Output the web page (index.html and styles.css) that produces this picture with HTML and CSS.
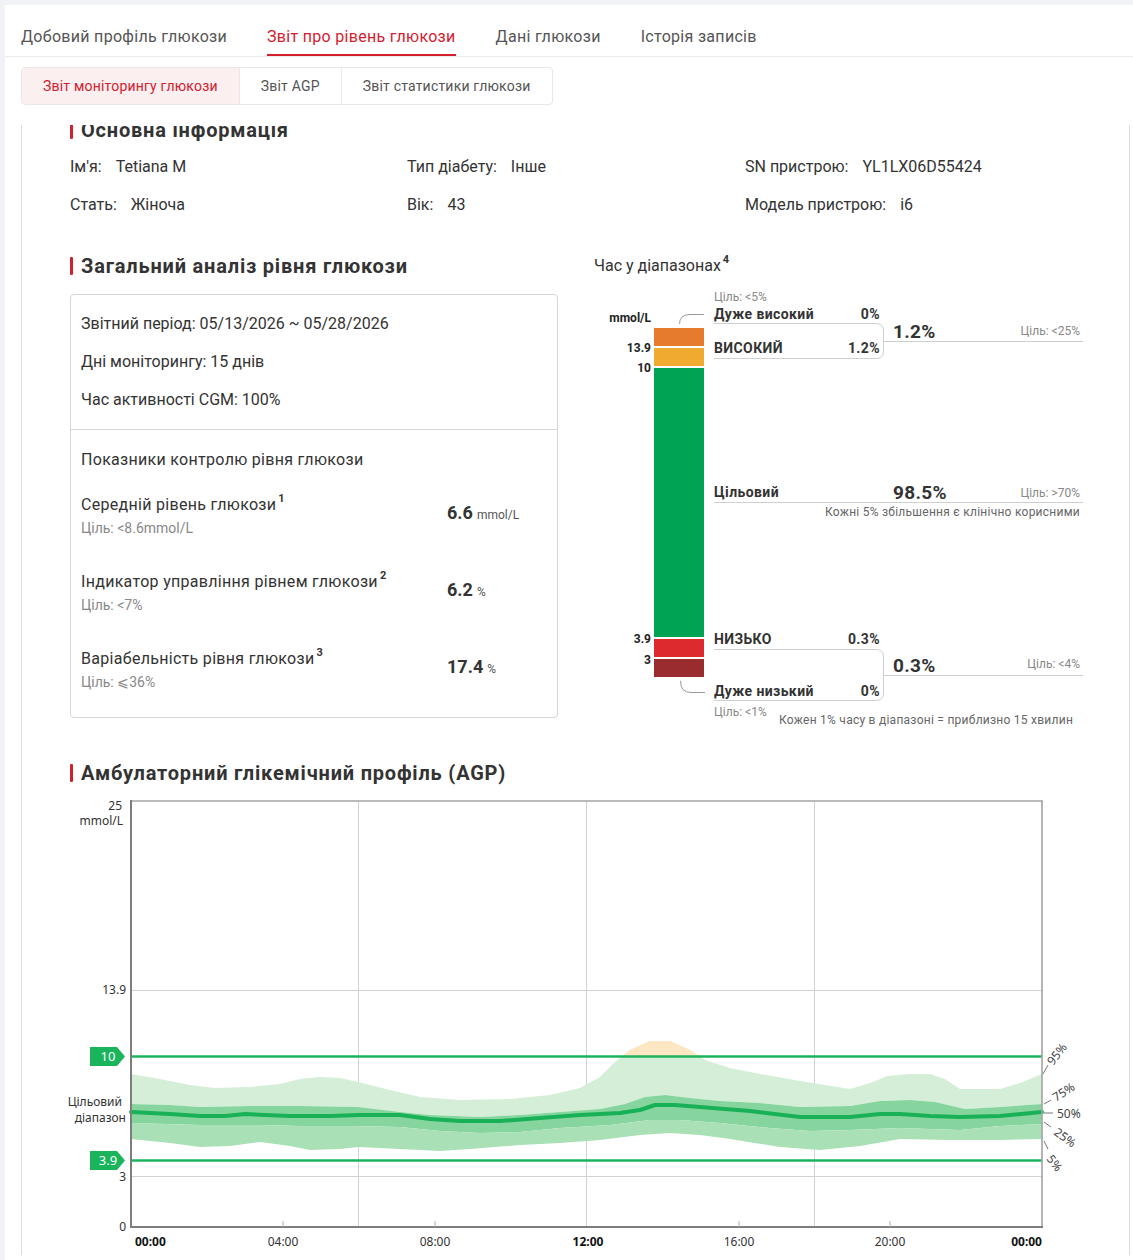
FILE: index.html
```html
<!DOCTYPE html>
<html lang="uk">
<head>
<meta charset="utf-8">
<title>Звіт про рівень глюкози</title>
<link rel="stylesheet" href="styles.css">
</head>
<body>
<div class="page">
  <nav class="tabs">
    <div class="tab">Добовий профіль глюкози</div>
    <div class="tab is-active">Звіт про рівень глюкози</div>
    <div class="tab">Дані глюкози</div>
    <div class="tab">Історія записів</div>
  </nav>

  <div class="subtabs">
    <div class="subtab is-active">Звіт моніторингу глюкози</div>
    <div class="subtab">Звіт AGP</div>
    <div class="subtab">Звіт статистики глюкози</div>
  </div>

  <div class="viewport">
    <div class="panel">
      <section class="info">
        <h2 class="sec-title">Основна інформація</h2>
        <div class="info-grid">
          <div class="info-item"><span class="info-label">Ім'я:</span><span>Tetiana M</span></div>
          <div class="info-item"><span class="info-label">Тип діабету:</span><span>Інше</span></div>
          <div class="info-item"><span class="info-label">SN пристрою:</span><span>YL1LX06D55424</span></div>
          <div class="info-item"><span class="info-label">Стать:</span><span>Жіноча</span></div>
          <div class="info-item"><span class="info-label">Вік:</span><span>43</span></div>
          <div class="info-item"><span class="info-label">Модель пристрою:</span><span>i6</span></div>
        </div>
      </section>

      <section class="overview">
        <div class="summary">
          <h2 class="sec-title">Загальний аналіз рівня глюкози</h2>
          <div class="card">
            <div class="card-top">
              <div class="card-line">Звітний період: 05/13/2026 ~ 05/28/2026</div>
              <div class="card-line">Дні моніторингу: 15 днів</div>
              <div class="card-line">Час активності CGM: 100%</div>
            </div>
            <div class="card-bottom">
              <div class="card-line card-heading">Показники контролю рівня глюкози</div>
              <div class="metric">
                <div class="metric-text">
                  <div class="metric-name">Середній рівень глюкози<sup class="note">1</sup></div>
                  <div class="metric-goal">Ціль: &lt;8.6mmol/L</div>
                </div>
                <div class="metric-value">6.6<span class="metric-unit">mmol/L</span></div>
              </div>
              <div class="metric">
                <div class="metric-text">
                  <div class="metric-name">Індикатор управління рівнем глюкози<sup class="note">2</sup></div>
                  <div class="metric-goal">Ціль: &lt;7%</div>
                </div>
                <div class="metric-value">6.2<span class="metric-unit">%</span></div>
              </div>
              <div class="metric">
                <div class="metric-text">
                  <div class="metric-name">Варіабельність рівня глюкози<sup class="note">3</sup></div>
                  <div class="metric-goal">Ціль: ⩽36%</div>
                </div>
                <div class="metric-value">17.4<span class="metric-unit">%</span></div>
              </div>
            </div>
          </div>
        </div>

        <div class="tir">
          <h3 class="tir-title">Час у діапазонах<sup class="note">4</sup></h3>
          <svg class="tir-chart" viewBox="0 0 490 460" xmlns="http://www.w3.org/2000/svg">
            <g transform="translate(-594 -278)">
              <!-- scale labels -->
              <text class="tir-axis" x="651" y="322" text-anchor="end">mmol/L</text>
              <text class="tir-axis" x="651" y="352" text-anchor="end">13.9</text>
              <text class="tir-axis" x="651" y="372" text-anchor="end">10</text>
              <text class="tir-axis" x="651" y="643" text-anchor="end">3.9</text>
              <text class="tir-axis" x="651" y="664" text-anchor="end">3</text>

              <!-- stacked range bar -->
              <rect x="654" y="328" width="50" height="18" fill="#e77b2d"/>
              <rect x="654" y="348" width="50" height="18" fill="#f0aa30"/>
              <rect x="654" y="368" width="50" height="269" fill="#00a254"/>
              <rect x="654" y="639" width="50" height="18" fill="#dc2a2f"/>
              <rect x="654" y="659" width="50" height="18" fill="#9a2b2f"/>

              <!-- connectors -->
              <path class="tir-link" d="M679.5 324 Q679.5 314.5 690 314.5 H704"/>
              <path class="tir-link" d="M680.5 681 Q680.5 692.5 691 692.5 H705"/>

              <!-- brackets and guide lines -->
              <path class="tir-bracket" d="M714 323.5 H876 Q883.5 323.5 883.5 331 V351 Q883.5 358.5 876 358.5 H714"/>
              <line class="tir-bracket" x1="883.5" y1="341.5" x2="1083" y2="341.5"/>
              <line class="tir-bracket" x1="714" y1="502.5" x2="1083" y2="502.5"/>
              <path class="tir-bracket" d="M714 649.5 H876 Q883.5 649.5 883.5 657 V693 Q883.5 700.5 876 700.5 H714"/>
              <line class="tir-bracket" x1="883.5" y1="675.5" x2="1083" y2="675.5"/>

              <!-- high side -->
              <text class="tir-goal" x="714" y="301">Ціль: &lt;5%</text>
              <text class="tir-label" x="714" y="319">Дуже високий</text>
              <text class="tir-label" x="880" y="319" text-anchor="end">0%</text>
              <text class="tir-label" x="714" y="353">ВИСОКИЙ</text>
              <text class="tir-label" x="880" y="353" text-anchor="end">1.2%</text>
              <text class="tir-big" x="893" y="338">1.2%</text>
              <text class="tir-goal" x="1080" y="335" text-anchor="end">Ціль: &lt;25%</text>

              <!-- target -->
              <text class="tir-label" x="714" y="497">Цільовий</text>
              <text class="tir-big" x="893" y="499">98.5%</text>
              <text class="tir-goal" x="1080" y="497" text-anchor="end">Ціль: &gt;70%</text>
              <text class="tir-note" x="1080" y="516" text-anchor="end">Кожні 5% збільшення є клінічно корисними</text>

              <!-- low side -->
              <text class="tir-label" x="714" y="644">НИЗЬКО</text>
              <text class="tir-label" x="880" y="644" text-anchor="end">0.3%</text>
              <text class="tir-big" x="893" y="672">0.3%</text>
              <text class="tir-goal" x="1080" y="668" text-anchor="end">Ціль: &lt;4%</text>
              <text class="tir-label" x="714" y="696">Дуже низький</text>
              <text class="tir-label" x="880" y="696" text-anchor="end">0%</text>
              <text class="tir-goal" x="714" y="716">Ціль: &lt;1%</text>
              <text class="tir-note" x="779" y="724">Кожен 1% часу в діапазоні = приблизно 15 хвилин</text>
            </g>
          </svg>
        </div>
      </section>

      <section class="agp">
        <h2 class="sec-title">Амбулаторний глікемічний профіль (AGP)</h2>
        <svg class="agp-chart" viewBox="0 0 1040 475" xmlns="http://www.w3.org/2000/svg">
          <defs>
            <clipPath id="above-target">
              <rect x="131" y="801" width="911" height="255"/>
            </clipPath>
          </defs>
          <g transform="translate(-70 -785)">
            <!-- grid -->
            <line class="grid" x1="358.5" y1="801" x2="358.5" y2="1227"/>
            <line class="grid" x1="586.5" y1="801" x2="586.5" y2="1227"/>
            <line class="grid" x1="814.5" y1="801" x2="814.5" y2="1227"/>
            <line class="grid" x1="131" y1="990.5" x2="1042" y2="990.5"/>
            <line class="grid" x1="131" y1="1176.5" x2="1042" y2="1176.5"/>

            <!-- 95%–75% band -->
            <path fill="#d4eed7" d="M131 1074 L160 1079 L190 1085 L215 1088 L250 1087 L280 1084 L300 1079 L320 1077 L340 1078 L358 1082 L390 1090 L420 1097 L460 1100 L510 1099 L550 1095 L580 1088 L600 1077 L615 1062 L630 1050 L650 1041 L670 1041 L690 1050 L705 1060 L730 1068 L760 1074 L800 1081 L850 1089 L873 1082 L887 1076 L910 1074 L930 1074 L945 1079 L960 1089 L1000 1089 L1020 1083 L1042 1074 L1042 1104 L1000 1107 L965 1109 L935 1102 L910 1100 L880 1101 L850 1106 L800 1107 L760 1103 L720 1101 L690 1098 L665 1095 L645 1097 L625 1104 L600 1109 L560 1112 L520 1115 L480 1117 L430 1115 L400 1112 L358 1107 L300 1106 L250 1106 L200 1107 L170 1105 L131 1104 Z"/>
            <!-- part of the 95% band above the target range -->
            <path fill="#fde7c2" clip-path="url(#above-target)" d="M580 1088 L600 1077 L615 1062 L630 1050 L650 1041 L670 1041 L690 1050 L705 1060 L730 1068 L730 1100 L580 1100 Z"/>
            <!-- 75%–25% band -->
            <path fill="#86d59e" d="M131 1104 L170 1105 L200 1107 L250 1106 L300 1106 L358 1107 L400 1112 L430 1115 L480 1117 L520 1115 L560 1112 L600 1109 L625 1104 L645 1097 L665 1095 L690 1098 L720 1101 L760 1103 L800 1107 L850 1106 L880 1101 L910 1100 L935 1102 L965 1109 L1000 1107 L1042 1104 L1042 1124 L1000 1126 L960 1130 L900 1128 L850 1130 L810 1131 L770 1128 L720 1123 L680 1120 L650 1120 L610 1125 L560 1128 L520 1132 L480 1133 L440 1131 L400 1127 L350 1126 L300 1126 L260 1125 L200 1125 L131 1123 Z"/>
            <!-- 25%–5% band -->
            <path fill="#a9e0b5" d="M131 1123 L200 1125 L260 1125 L300 1126 L350 1126 L400 1127 L440 1131 L480 1133 L520 1132 L560 1128 L610 1125 L650 1120 L680 1120 L720 1123 L770 1128 L810 1131 L850 1130 L900 1128 L960 1130 L1000 1126 L1042 1124 L1042 1139 L1000 1140 L950 1140 L900 1139 L860 1146 L820 1150 L780 1147 L730 1139 L700 1135 L670 1133 L640 1135 L600 1140 L560 1143 L520 1145 L470 1149 L440 1151 L400 1149 L358 1147 L340 1149 L310 1150 L290 1146 L260 1142 L230 1146 L200 1147 L170 1143 L131 1139 Z"/>
            <!-- median -->
            <path class="median" d="M131 1112 L170 1114 L200 1116 L225 1116 L245 1114 L265 1115 L290 1116 L330 1116 L360 1115 L400 1115 L430 1119 L460 1121 L500 1121 L540 1118 L580 1115 L620 1113 L640 1110 L655 1105 L675 1105 L700 1107 L750 1111 L800 1117 L850 1117 L880 1114 L900 1114 L930 1116 L960 1117 L1000 1116 L1042 1112"/>

            <!-- target range lines -->
            <line class="target-line" x1="131" y1="1056.5" x2="1042" y2="1056.5"/>
            <line class="target-line" x1="131" y1="1160.5" x2="1042" y2="1160.5"/>

            <!-- frame -->
            <line class="frame-light" x1="131" y1="801" x2="1043" y2="801"/>
            <line class="frame-light" x1="1042" y1="801" x2="1042" y2="1228"/>
            <line class="frame" x1="131" y1="800" x2="131" y2="1228"/>
            <line class="frame" x1="130" y1="1227" x2="1043" y2="1227"/>
            <line class="tick" x1="283" y1="1221" x2="283" y2="1227"/>
            <line class="tick" x1="435" y1="1221" x2="435" y2="1227"/>
            <line class="tick" x1="739" y1="1221" x2="739" y2="1227"/>
            <line class="tick" x1="890" y1="1221" x2="890" y2="1227"/>

            <!-- y axis -->
            <text class="agp-axis" x="122" y="810" text-anchor="end">25</text>
            <text class="agp-axis" x="123" y="825" text-anchor="end">mmol/L</text>
            <text class="agp-axis" x="122" y="1106" text-anchor="end">Цільовий</text>
            <text class="agp-axis" x="126" y="1122" text-anchor="end">діапазон</text>
            <text class="agp-axis" x="126" y="994" text-anchor="end">13.9</text>
            <text class="agp-axis" x="126" y="1181" text-anchor="end">3</text>
            <text class="agp-axis" x="126" y="1231" text-anchor="end">0</text>

            <path class="tag" d="M90 1047 H117 L125 1056.5 L117 1066 H90 Z"/>
            <text class="agp-tag" x="108" y="1061" text-anchor="middle">10</text>
            <path class="tag" d="M90 1151 H117 L125 1160.5 L117 1170 H90 Z"/>
            <text class="agp-tag" x="108" y="1165" text-anchor="middle">3.9</text>

            <!-- x axis -->
            <text class="agp-axis strong" x="135" y="1246">00:00</text>
            <text class="agp-axis" x="283" y="1246" text-anchor="middle">04:00</text>
            <text class="agp-axis" x="435" y="1246" text-anchor="middle">08:00</text>
            <text class="agp-axis strong" x="588" y="1246" text-anchor="middle">12:00</text>
            <text class="agp-axis" x="739" y="1246" text-anchor="middle">16:00</text>
            <text class="agp-axis" x="890" y="1246" text-anchor="middle">20:00</text>
            <text class="agp-axis strong" x="1042" y="1246" text-anchor="end">00:00</text>

            <!-- percentile captions -->
            <line class="leader" x1="1043" y1="1074" x2="1048" y2="1065"/>
            <text class="agp-pct" transform="translate(1053 1066) rotate(-52)">95%</text>
            <line class="leader" x1="1044" y1="1104" x2="1051" y2="1100"/>
            <text class="agp-pct" transform="translate(1056 1102) rotate(-33)">75%</text>
            <line class="leader" x1="1044" y1="1113" x2="1053" y2="1113"/>
            <text class="agp-pct" x="1057" y="1118">50%</text>
            <line class="leader" x1="1044" y1="1122" x2="1051" y2="1127"/>
            <text class="agp-pct" transform="translate(1053 1134) rotate(36)">25%</text>
            <line class="leader" x1="1044" y1="1141" x2="1048" y2="1149"/>
            <text class="agp-pct" transform="translate(1046 1159) rotate(52)">5%</text>
          </g>
        </svg>
      </section>
    </div>
  </div>
</div>
</body>
</html>
```

FILE: styles.css
```css
* { box-sizing: border-box; }

body {
  margin: 0;
  background: #f0f2f5;
  font-family: Roboto, "Noto Sans", sans-serif;
  color: #333;
}

.page {
  margin: 5px 0 0 5px;
  height: 1255px;
  background: #fff;
  overflow: hidden;
}

/* main tabs */
.tabs {
  display: flex;
  align-items: flex-end;
  gap: 40px;
  height: 52px;
  padding-left: 16px;
  border-bottom: 1px solid #ebebeb;
}
.tab {
  font-size: 16px;
  line-height: 22px;
  letter-spacing: 0.3px;
  padding-bottom: 6px;
  border-bottom: 2px solid transparent;
  color: #555;
  white-space: nowrap;
}
.tab.is-active {
  color: #d3202f;
  border-bottom-color: #d3202f;
}

/* report sub tabs */
.subtabs {
  display: flex;
  width: fit-content;
  margin: 10px 0 0 16px;
  border: 1px solid #e8e8e8;
  border-radius: 4px;
  overflow: hidden;
}
.subtab {
  height: 36px;
  line-height: 36px;
  padding: 0 21px;
  font-size: 14px;
  letter-spacing: 0.2px;
  color: #555;
  border-left: 1px solid #e8e8e8;
  white-space: nowrap;
}
.subtab:first-child { border-left: 0; }
.subtab.is-active {
  background: #fbefef;
  color: #d3202f;
}

/* scrolling report area */
.viewport {
  margin: 20px 3px 0 16px;
  height: 1130px;
  overflow: hidden;
}
.panel {
  margin-top: -7px;
  padding-left: 48px;
  border-left: 1px solid #dcdcdc;
  border-right: 1px solid #dcdcdc;
  min-height: 1200px;
}

.sec-title {
  display: flex;
  align-items: center;
  margin: 0;
  font-size: 20px;
  line-height: 24px;
  font-weight: 700;
  letter-spacing: 0.8px;
  color: #333;
  white-space: nowrap;
}
.sec-title::before {
  content: "";
  width: 3px;
  height: 18px;
  margin-right: 8px;
  background: #d3202f;
  border-radius: 1px;
}

/* basic info */
.info-grid {
  display: grid;
  grid-template-columns: 337px 338px 1fr;
  row-gap: 16px;
  margin-top: 14px;
  font-size: 16px;
  line-height: 22px;
}
.info-label { margin-right: 14px; }

/* overview row */
.overview {
  display: flex;
  margin-top: 38px;
}
.summary { width: 488px; flex: none; }

.card {
  margin-top: 16px;
  border: 1px solid #d6d6d6;
  border-radius: 4px;
  font-size: 16px;
  line-height: 22px;
}
.card-top {
  padding: 18px 10px 18px;
  border-bottom: 1px solid #d6d6d6;
}
.card-top .card-line + .card-line { margin-top: 16px; }
.card-bottom {
  padding: 19px 10px 25px;
}
.card-heading { letter-spacing: 0.3px; }

.metric {
  display: flex;
  align-items: center;
  margin-top: 33px;
}
.card-line + .metric { margin-top: 23px; }
.metric-text { width: 366px; flex: none; }
.metric-name { line-height: 22px; letter-spacing: 0.3px; }
.metric-goal {
  margin-top: 2px;
  font-size: 14px;
  line-height: 20px;
  color: #888;
}
.metric-value {
  margin-top: -4px;
  font-size: 18px;
  font-weight: 700;
  color: #333;
}
.metric-unit {
  margin-left: 4px;
  font-size: 12px;
  font-weight: 400;
  color: #555;
}

.note {
  position: relative;
  top: -2px;
  margin-left: 2px;
  font-size: 11px;
  font-weight: 700;
  line-height: 0;
  letter-spacing: 0;
}

/* time in range */
.tir { margin-left: 36px; }
.tir-title {
  margin: 0;
  font-size: 16px;
  line-height: 24px;
  font-weight: 400;
  color: #333;
  white-space: nowrap;
}
.tir-chart {
  display: block;
  width: 490px;
  height: 460px;
  overflow: visible;
}
.tir-axis { font: 700 12px Roboto, "Noto Sans", sans-serif; fill: #222; }
.tir-label { font: 700 14px Roboto, "Noto Sans", sans-serif; fill: #333; letter-spacing: 0.4px; }
.tir-big { font: 700 19px Roboto, "Noto Sans", sans-serif; fill: #333; letter-spacing: 0.3px; }
.tir-goal { font: 400 12px Roboto, "Noto Sans", sans-serif; fill: #888; }
.tir-note { font: 400 12px Roboto, "Noto Sans", sans-serif; fill: #666; letter-spacing: 0.25px; }
.tir-link { fill: none; stroke: #9a9a9a; stroke-width: 1; }
.tir-bracket { fill: none; stroke: #cfcfcf; stroke-width: 1; }

/* ambulatory glucose profile */
.agp { margin-top: 23px; }
.agp-chart {
  display: block;
  width: 1040px;
  height: 475px;
  overflow: visible;
}
.grid { stroke: #d2d2d2; stroke-width: 1; }
.frame { stroke: #7d7d7d; stroke-width: 2; }
.frame-light { stroke: #a3a3a3; stroke-width: 1.6; }
.tick { stroke: #b0b0b0; stroke-width: 1; }
.target-line { stroke: #1db35c; stroke-width: 2.5; }
.median { fill: none; stroke: #18b157; stroke-width: 4; stroke-linejoin: round; stroke-linecap: round; }
.tag { fill: #19b45b; }
.leader { stroke: #777; stroke-width: 1; }
.agp-axis { font: 400 12px "Noto Sans", sans-serif; fill: #333; }
.agp-axis.strong { font-weight: 700; fill: #111; }
.agp-tag { font: 400 13px "Noto Sans", sans-serif; fill: #fff; }
.agp-pct { font: 400 12px "Noto Sans", sans-serif; fill: #444; }
```
